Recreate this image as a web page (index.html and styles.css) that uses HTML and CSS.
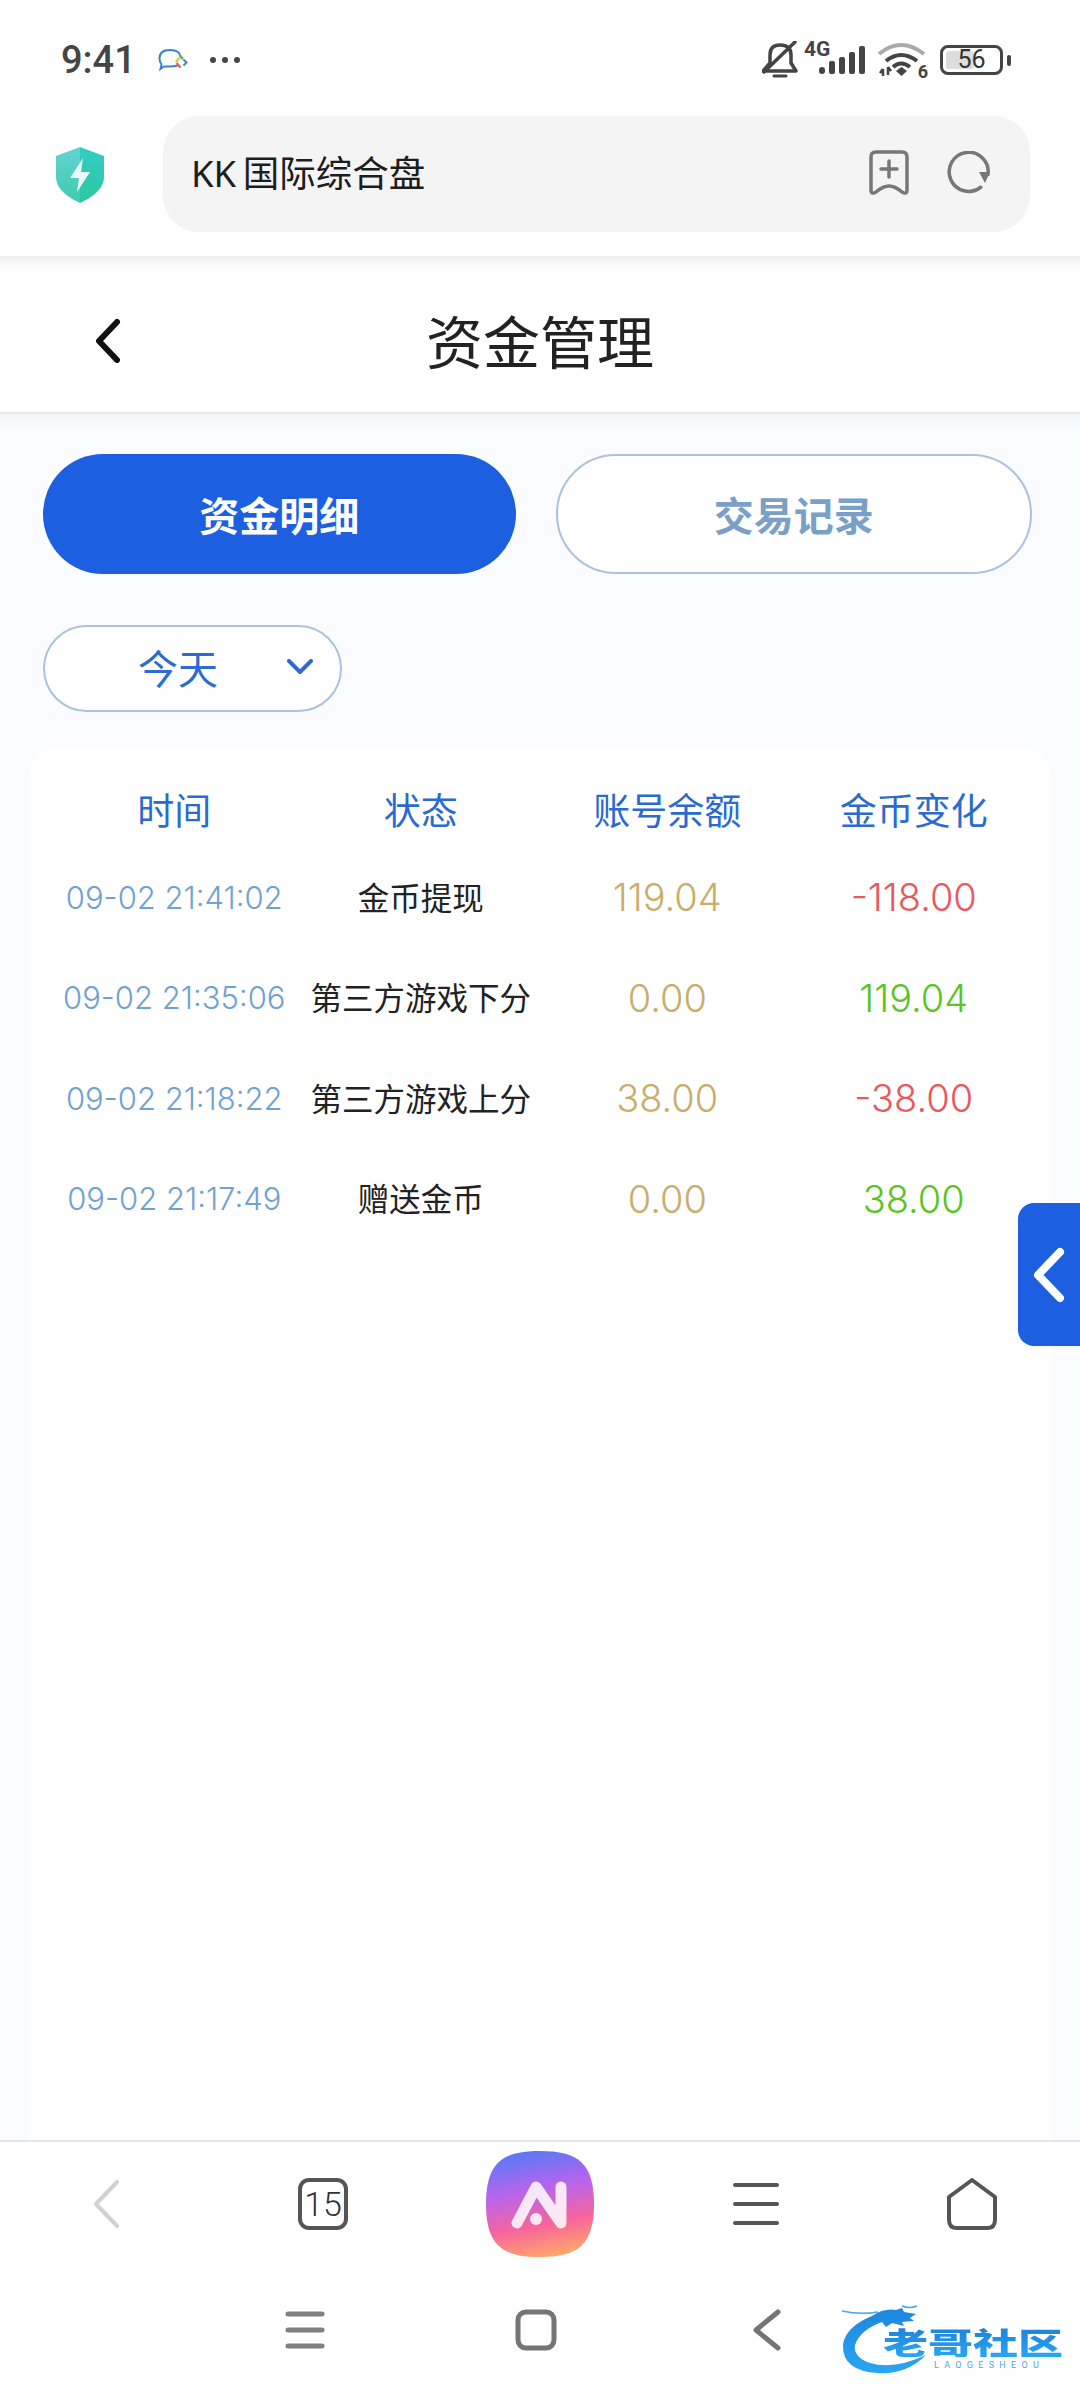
FILE: index.html
```html
<!DOCTYPE html>
<html lang="zh-CN">
<head>
<meta charset="utf-8">
<title>资金管理</title>
<link rel="stylesheet" href="styles.css">
</head>
<body>
<div class="screen">
  <header class="browser">
    <div class="status">
      <div class="status-left">
        <span class="clock">9:41</span>
        <svg class="chat" width="30" height="24" viewBox="0 0 30 24">
          <path d="M20 17.500Q16 18.500 11 18.500H6L2.500 21 3.500 16.500Q1.500 14 1.500 10.500 1.500 2 12 2 22 2 22.500 9" fill="none" stroke="#3b86c6" stroke-width="2"/>
          <path d="M22 8l3 3" stroke="#62b35a" stroke-width="2.500"/>
          <path d="M25.500 11.500l3 3-3 3" fill="none" stroke="#3b86c6" stroke-width="2"/>
          <path d="M18 14l3-4" stroke="#e8c24a" stroke-width="2.500"/>
          <path d="M18.500 15l4 4.500" stroke="#d96a5a" stroke-width="2.500"/>
        </svg>
        <span class="dots"><i></i><i></i><i></i></span>
      </div>
      <div class="status-right">
        <svg class="bell" width="36" height="38" viewBox="0 0 36 38">
          <path d="M1 30H34L29 22V14Q29 4 18 4 8 4 8 14V22Z" fill="none" stroke="#444" stroke-width="3.500" stroke-linejoin="round"/>
          <path d="M2 31L33 1" stroke="#444" stroke-width="3.500" stroke-linecap="round"/>
          <path d="M12 35H24" stroke="#444" stroke-width="3" stroke-linecap="round"/>
        </svg>
        <div class="signal">
          <span class="net">4G</span>
          <svg width="46" height="29" viewBox="0 0 46 29">
            <rect x="0" y="21" width="6" height="7" rx="3" fill="#444"/>
            <rect x="10" y="15" width="6" height="13" rx="2" fill="#444"/>
            <rect x="20" y="11" width="6" height="17" rx="2" fill="#444"/>
            <rect x="30" y="6" width="6" height="22" rx="2" fill="#444"/>
            <rect x="40" y="0" width="6" height="28" rx="2" fill="#444"/>
          </svg>
        </div>
        <div class="wifi">
          <svg width="48" height="36" viewBox="0 0 48 36">
            <path d="M1 12Q23 -6 46 12" fill="none" stroke="#aaa" stroke-width="4"/>
            <path d="M8 19Q23 7 39 19" fill="none" stroke="#444" stroke-width="4"/>
            <path d="M15 25Q23 18 32 25" fill="none" stroke="#444" stroke-width="4"/>
            <path d="M18 29L23.500 25 29 29 23.500 34Z" fill="#444"/>
            <path d="M5 27V34M2 31L5 27M10 25V33M10 25L13 29" fill="none" stroke="#444" stroke-width="2.500"/>
          </svg>
          <span class="wifi-six">6</span>
        </div>
        <div class="battery"><span class="battery-fill"></span><span class="battery-num">56</span></div>
        <span class="battery-nub"></span>
      </div>
    </div>
    <div class="urlrow">
      <svg class="shield" width="48" height="56" viewBox="0 0 48 56">
        <defs>
          <linearGradient id="shieldL" x1="0" y1="0" x2="0" y2="1"><stop offset="0" stop-color="#63d3d2"/><stop offset="1" stop-color="#3fcbb0"/></linearGradient>
          <linearGradient id="shieldR" x1="0" y1="0" x2="0" y2="1"><stop offset="0" stop-color="#33cdc6"/><stop offset="1" stop-color="#2cc7a0"/></linearGradient>
        </defs>
        <path d="M24 0L48 9V30Q48 45 24 56Z" fill="url(#shieldR)"/>
        <path d="M24 0L0 9V30Q0 45 24 56Z" fill="url(#shieldL)"/>
        <path d="M27 11L14 31H23L21 45 34 25H25Z" fill="#eafaf7"/>
      </svg>
      <div class="urlbar">
        <span class="urltext">KK 国际综合盘</span>
        <svg class="bookmark" width="40" height="46" viewBox="0 0 40 46">
          <path d="M7 2H33Q38 2 38 7V40Q38 45 33 42 26 36 20 36 14 36 7 42 2 45 2 40V7Q2 2 7 2Z" fill="none" stroke="#777" stroke-width="3.500"/>
          <path d="M20 11V27M12 19H28" stroke="#777" stroke-width="3.500" stroke-linecap="round"/>
        </svg>
        <svg class="refresh" width="44" height="44" viewBox="0 0 44 44">
          <path d="M36 34A19.500 19.500 0 1 1 41 20" fill="none" stroke="#777" stroke-width="3.500" stroke-linecap="round" transform="rotate(10 22 22)"/>
          <path d="M32 21H43L38 32Z" fill="#777"/>
        </svg>
      </div>
    </div>
  </header>

  <div class="pagebar">
    <svg width="26" height="44" viewBox="0 0 26 44"><path d="M22 3L4 22 22 41" fill="none" stroke="#111" stroke-width="6" stroke-linecap="round" stroke-linejoin="round"/></svg>
    <h1 class="pagetitle">资金管理</h1>
  </div>

  <main class="content">
    <div class="tabs">
      <button class="tab tab-on">资金明细</button>
      <button class="tab tab-off">交易记录</button>
    </div>
    <div class="range">
      <span class="range-text">今天</span>
      <svg width="26" height="16" viewBox="0 0 26 16"><path d="M2 2L13 13 24 2" fill="none" stroke="#2e6bd0" stroke-width="4" stroke-linecap="round" stroke-linejoin="round"/></svg>
    </div>
    <section class="card">
      <div class="row row-head">
        <span>时间</span><span>状态</span><span>账号余额</span><span>金币变化</span>
      </div>
      <div class="row">
        <span class="date">09-02 21:41:02</span><span class="state">金币提现</span><span class="num gold">119.04</span><span class="num red">-118.00</span>
      </div>
      <div class="row">
        <span class="date">09-02 21:35:06</span><span class="state">第三方游戏下分</span><span class="num gold">0.00</span><span class="num green">119.04</span>
      </div>
      <div class="row">
        <span class="date">09-02 21:18:22</span><span class="state">第三方游戏上分</span><span class="num gold">38.00</span><span class="num red">-38.00</span>
      </div>
      <div class="row">
        <span class="date">09-02 21:17:49</span><span class="state">赠送金币</span><span class="num gold">0.00</span><span class="num green">38.00</span>
      </div>
    </section>
  </main>

  <div class="sidetab">
    <svg width="34" height="56" viewBox="0 0 34 56"><path d="M28 5L6 28 28 51" fill="none" stroke="#fff" stroke-width="8" stroke-linecap="round" stroke-linejoin="round"/></svg>
  </div>

  <nav class="toolbar">
    <svg class="tool-back" width="26" height="48" viewBox="0 0 26 48"><path d="M24 2L3 24 24 46" fill="none" stroke="#d2d2d2" stroke-width="4" stroke-linecap="round" stroke-linejoin="round"/></svg>
    <span class="tabcount">15</span>
    <svg class="appicon" width="108" height="106" viewBox="0 0 108 106">
      <defs>
        <linearGradient id="appG" x1="0.400" y1="0" x2="0.600" y2="1">
          <stop offset="0" stop-color="#5b79f6"/>
          <stop offset="0.350" stop-color="#b664ee"/>
          <stop offset="0.700" stop-color="#f7659b"/>
          <stop offset="1" stop-color="#ffa86a"/>
        </linearGradient>
      </defs>
      <path d="M54 0C92 0 108 12 108 53 108 94 92 106 54 106 16 106 0 94 0 53 0 12 16 0 54 0Z" fill="url(#appG)"/>
      <path d="M31 72L50 36 75 72V36" fill="none" stroke="#fff" stroke-opacity="0.850" stroke-width="11" stroke-linecap="round" stroke-linejoin="round"/>
      <circle cx="50" cy="68" r="6" fill="#fff" fill-opacity="0.850"/>
    </svg>
    <svg width="46" height="44" viewBox="0 0 46 44"><path d="M2 3H44M2 22H44M2 41H44" stroke="#555" stroke-width="4" stroke-linecap="round"/></svg>
    <svg width="50" height="52" viewBox="0 0 50 52"><path d="M25 2L48 19V42Q48 50 40 50H10Q2 50 2 42V19Z" fill="none" stroke="#555" stroke-width="4" stroke-linejoin="round"/></svg>
  </nav>

  <nav class="sysnav">
    <svg width="40" height="38" viewBox="0 0 40 38"><path d="M3 3H37M3 19H37M3 35H37" stroke="#808080" stroke-width="5" stroke-linecap="round"/></svg>
    <svg width="42" height="42" viewBox="0 0 42 42"><rect x="3" y="3" width="36" height="36" rx="8" fill="none" stroke="#757575" stroke-width="5"/></svg>
    <svg width="28" height="42" viewBox="0 0 28 42"><path d="M25 3L3 21 25 39" fill="none" stroke="#757575" stroke-width="5" stroke-linecap="round" stroke-linejoin="round"/></svg>
  </nav>

  <div class="watermark">
    <svg class="dragon" width="100" height="72" viewBox="0 0 100 72">
      <defs>
        <linearGradient id="drag" x1="0" y1="0" x2="0" y2="1"><stop offset="0" stop-color="#1c86dd"/><stop offset="1" stop-color="#2aa6f2"/></linearGradient>
      </defs>
      <path d="M30 13Q42 5 54 7L60 5 62 9 74 11 68 15 72 18 60 19 62 23 50 20 44 24 40 19Q18 27 13 42 11 54 28 60 52 67 84 52 64 72 36 70 0 68 1 42 3 24 30 13Z" fill="url(#drag)"/>
      <path d="M0 8Q18 12 36 9" fill="none" stroke="#4aa4e8" stroke-width="1.500"/>
      <path d="M60 3Q68 6 75 3" fill="none" stroke="#4aa4e8" stroke-width="1.500"/>
    </svg>
    <span class="wm-cn">老哥社区</span>
    <span class="wm-en">LAOGESHEOU</span>
  </div>
</div>
</body>
</html>
```

FILE: styles.css
```css
* { box-sizing: border-box; }
html, body { margin: 0; padding: 0; background: #fff; }
body { font-family: Inter, "Noto Sans CJK SC", sans-serif; color: #222; }
svg { display: block; flex: none; }

.screen {
  position: relative;
  width: 1080px;
  height: 2400px;
  display: flex;
  flex-direction: column;
  overflow: hidden;
  background: #fff;
}

/* browser chrome */
.browser { height: 256px; flex: none; background: #fff; }
.status {
  height: 116px;
  padding: 40px 69px 0 61px;
  display: flex;
  justify-content: space-between;
  align-items: flex-start;
}
.status-left { display: flex; align-items: center; height: 40px; }
.clock { font: 500 38px/40px Roboto, sans-serif; color: #444; width: 97px; }
.chat { margin-right: 21px; }
.dots { display: flex; gap: 6px; padding-left: 1px; }
.dots i { width: 6px; height: 6px; border-radius: 50%; background: #444; display: block; }

.status-right { display: flex; align-items: center; height: 40px; }
.bell { margin-right: 6px; }
.signal { position: relative; width: 61px; height: 40px; margin-right: 13px; }
.signal svg { position: absolute; right: 0; bottom: 5px; }
.net { position: absolute; left: 0; top: -2px; font: 700 21px/22px Roboto, sans-serif; color: #444; }
.wifi { position: relative; width: 48px; height: 36px; margin-right: 14px; }
.wifi-six { position: absolute; right: -2px; bottom: -3px; font: 700 18px/18px Roboto, sans-serif; color: #444; }
.battery {
  position: relative;
  width: 63px;
  height: 30px;
  border: 3.500px solid #444;
  border-radius: 8px;
  display: flex;
  align-items: center;
  justify-content: center;
}
.battery-fill { position: absolute; left: 3px; top: 3px; bottom: 3px; width: 28px; background: #ddd; border-radius: 3px; }
.battery-num { position: relative; font: 400 25px/24px Roboto, sans-serif; color: #333; }
.battery-nub { width: 4px; height: 11px; margin-left: 4px; background: #444; border-radius: 2px; }

.urlrow { height: 140px; display: flex; align-items: flex-start; padding-left: 56px; }
.shield { margin: 31px 59px 0 0; }
.urlbar {
  width: 867px;
  height: 116px;
  background: #f4f4f4;
  border-radius: 36px;
  display: flex;
  align-items: center;
  padding: 0 0 2px 28px;
}
.urltext { font: 400 36.500px/48px "Noto Sans", "Noto Sans CJK SC", sans-serif; color: #1d1d1d; flex: 1; word-spacing: -3px; }
.bookmark { margin-right: 38px; }
.refresh { margin-right: 39px; }

/* page header */
.pagebar {
  position: relative;
  height: 158px;
  flex: none;
  background: linear-gradient(#eeeeee 0, #fbfbfb 8px, #fff 16px);
  border-bottom: 2px solid #e9ebee;
  display: flex;
  align-items: center;
  padding: 14px 0 0 95px;
}
.pagetitle {
  position: absolute;
  left: 0;
  right: 0;
  top: 45px;
  margin: 0;
  text-align: center;
  font: 400 57px/76px "Noto Sans CJK SC", sans-serif;
  color: #222;
}

/* content */
.content {
  flex: 1;
  min-height: 0;
  display: flex;
  flex-direction: column;
  padding-top: 40px;
  background: linear-gradient(#f3f5f8 0, #fafcff 16px);
}
.tabs { display: flex; gap: 40px; padding: 0 48px 0 43px; }
.tab {
  flex: 1;
  height: 120px;
  border-radius: 60px;
  font: 700 40px/50px "Noto Sans CJK SC", sans-serif;
  padding: 0;
}
.tab-on { background: #1c5fe0; border: 0; color: #fff; }
.tab-off { background: #fff; border: 2px solid #a9c3de; color: #7ba0c8; }

.range {
  width: 299px;
  height: 87px;
  margin: 51px 0 34px 43px;
  background: #fff;
  border: 2px solid #a9c3de;
  border-radius: 44px;
  display: flex;
  align-items: center;
  padding: 0 27px 4px 93px;
  justify-content: space-between;
}
.range-text { font: 400 40px/50px "Noto Sans CJK SC", sans-serif; color: #2e6bd0; }

.card {
  flex: 1;
  margin: 0 29px;
  padding: 0 0 0 22px;
  background: #fff;
  border-radius: 32px 32px 0 0;
}
.row {
  display: grid;
  grid-template-columns: repeat(4, 246.500px);
  height: 100.500px;
  align-items: center;
  justify-items: center;
}
.row-head {
  height: 101px;
  padding-top: 24px;
  font: 400 37px/48px "Noto Sans CJK SC", sans-serif;
  color: #2a6bcf;
}
.date { font-size: 31px; font-weight: 300; color: #6fa2cf; white-space: nowrap; }
.state { font-size: 31.500px; color: #222; white-space: nowrap; font-family: "Noto Sans CJK SC", sans-serif; padding-bottom: 3px; }
.num { font-size: 38px; font-weight: 300; }
.gold { color: #c9ad6a; }
.red { color: #e8585e; }
.green { color: #5cc41f; }

.sidetab {
  position: absolute;
  right: 0;
  top: 1203px;
  width: 62px;
  height: 143px;
  background: #1c5fe0;
  border-radius: 16px 0 0 16px;
  display: flex;
  align-items: center;
  justify-content: center;
}

/* bottom bars */
.toolbar {
  height: 126px;
  flex: none;
  background: #fff;
  border-top: 2px solid #e6e6e6;
  display: grid;
  grid-template-columns: repeat(5, 216px);
  align-items: center;
  justify-items: center;
}
.tool-back { margin-right: 5px; }
.tabcount {
  width: 50px;
  height: 52px;
  margin-right: 2px;
  border: 4px solid #555;
  border-radius: 11px;
  display: flex;
  align-items: center;
  justify-content: center;
  font: 300 34px/40px Roboto, sans-serif;
  color: #333;
}
.sysnav {
  height: 134px;
  flex: none;
  background: #fff;
  display: grid;
  grid-template-columns: repeat(3, 231px);
  padding: 0 0 6px 189px;
  align-items: center;
  justify-items: center;
}
.watermark {
  position: absolute;
  left: 842px;
  top: 2303px;
  width: 222px;
  height: 74px;
}
.dragon { position: absolute; left: 0; top: 0; }
.wm-cn {
  position: absolute;
  left: 41px;
  top: 22px;
  font: 900 30px/32px "Noto Sans CJK SC", sans-serif;
  background: linear-gradient(#1d7fd8, #29a5f5);
  -webkit-background-clip: text;
  background-clip: text;
  color: transparent;
  white-space: nowrap;
  transform: scaleX(1.500);
  transform-origin: left center;
}
.wm-en {
  position: absolute;
  left: 92px;
  top: 57px;
  font: 400 9px/10px Roboto, sans-serif;
  letter-spacing: 5.300px;
  color: #4ea6ea;
  white-space: nowrap;
}
```
